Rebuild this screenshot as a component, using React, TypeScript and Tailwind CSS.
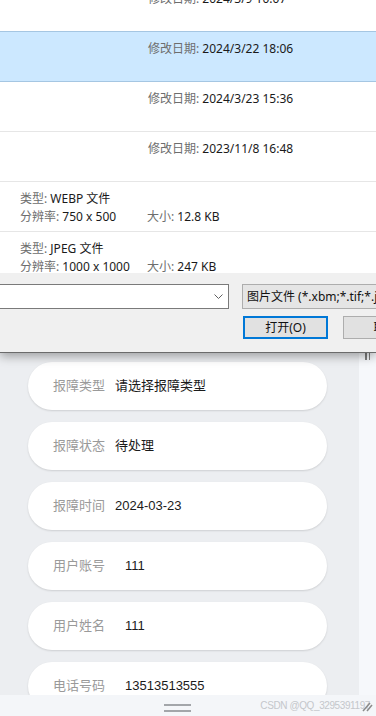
import React from "react";

const dlgFont = { fontFamily: '"Noto Sans", "Noto Sans CJK SC", sans-serif' };
const pageFont = { fontFamily: '"Liberation Sans", "Noto Sans CJK SC", sans-serif' };

function DateRow({ date, selected, borderBlue }: { date: string; selected?: boolean; borderBlue?: boolean }) {
  return (
    <div
      className={`h-[50px] pl-[148px] pt-[9px] text-[12px] leading-[16px] border-b ${
        borderBlue ? "border-[#a5c6e2]" : "border-[#e6e6e6]"
      } ${selected ? "bg-[#cce8ff]" : "bg-white"}`}
    >
      <span className="text-[#6d6d6d]">修改日期: </span>
      <span className="text-[#1a1a1a]">{date}</span>
    </div>
  );
}

function DetailRow({ type, res, size }: { type: string; res: string; size: string }) {
  return (
    <div className="h-[50px] pl-[20px] pt-[8px] text-[12px] leading-[18px] border-b border-[#e6e6e6] bg-white">
      <div>
        <span className="text-[#6d6d6d]">类型: </span>
        <span className="text-[#1a1a1a]">{type}</span>
      </div>
      <div className="flex">
        <div className="w-[127px] shrink-0">
          <span className="text-[#6d6d6d]">分辨率: </span>
          <span className="text-[#1a1a1a]">{res}</span>
        </div>
        <div>
          <span className="text-[#6d6d6d]">大小: </span>
          <span className="text-[#1a1a1a]">{size}</span>
        </div>
      </div>
    </div>
  );
}

function Dialog() {
  return (
    <div
      className="relative z-10 h-[353px] shrink-0 flex flex-col overflow-hidden bg-[#f0f0f0] border-b border-[#6b6b6b] shadow-[0_3px_10px_rgba(0,0,0,0.35)]"
      style={dlgFont}
    >
      <div className="h-[273px] shrink-0 overflow-hidden bg-white">
        <div className="mt-[-18px]">
          <DateRow date="2024/3/9 10:07" borderBlue />
          <DateRow date="2024/3/22 18:06" selected borderBlue />
          <DateRow date="2024/3/23 15:36" />
          <DateRow date="2023/11/8 16:48" />
          <DetailRow type="WEBP 文件" res="750 x 500" size="12.8 KB" />
          <DetailRow type="JPEG 文件" res="1000 x 1000" size="247 KB" />
        </div>
      </div>
      <div className="flex-1 flex flex-col pt-[11px] text-[12px]">
        <div className="flex gap-[13px] items-center">
          <div className="w-[229px] h-[25px] shrink-0 bg-white border border-l-0 border-[#7a7a7a] flex items-center justify-end pr-[5px]">
            <svg width="9" height="5" viewBox="0 0 9 5" fill="none">
              <path d="M0.5 0.5 L4.5 4.5 L8.5 0.5" stroke="#606060" strokeWidth="1" />
            </svg>
          </div>
          <div className="h-[25px] w-[170px] shrink-0 bg-[#e5e5e5] border border-[#adadad] flex items-center pl-[4px] text-[#111] whitespace-nowrap">
            图片文件 (*.xbm;*.tif;*.jfif;*.ico;*.tiff;*.gif)
          </div>
        </div>
        <div className="flex gap-[15px] mt-[7px] pl-[243px]">
          <div className="w-[85px] h-[23px] shrink-0 bg-[#e1e1e1] border-2 border-[#0078d7] flex items-center justify-center text-[#111]">
            打开(O)
          </div>
          <div className="w-[85px] h-[23px] shrink-0 bg-[#e1e1e1] border border-[#adadad] flex items-center justify-center text-[#111]">
            取消
          </div>
        </div>
      </div>
    </div>
  );
}

function Card({ label, value, wide }: { label: string; value: string; wide?: boolean }) {
  return (
    <div className="h-[48px] shrink-0 rounded-full bg-white shadow-[0_1px_2px_rgba(0,0,0,0.13)] flex items-center pl-[25px] text-[13px]">
      <span className="text-[#9a9a9a]">{label}</span>
      <span className={`${wide ? "ml-[20px]" : "ml-[10px]"} text-[#1b1b1b]`}>{value}</span>
    </div>
  );
}

export default function App() {
  return (
    <div className="w-[376px] h-[716px] overflow-hidden flex flex-col bg-[#eceef1]" style={pageFont}>
      <Dialog />
      <div className="flex flex-1 min-h-0">
        <div className="w-[359px] shrink-0 flex flex-col gap-[12px] pt-[9px] pl-[28px] pr-[32px] overflow-hidden">
          <Card label="报障类型" value="请选择报障类型" />
          <Card label="报障状态" value="待处理" />
          <Card label="报障时间" value="2024-03-23" />
          <Card label="用户账号" value="111" wide />
          <Card label="用户姓名" value="111" wide />
          <Card label="电话号码" value="13513513555" wide />
        </div>
        <div className="flex-1 bg-[#f6f8fb] flex justify-center pt-0">
          <div className="flex gap-[2px] h-[7px]">
            <div className="w-[1.5px] h-full bg-[#7d7d7d]" />
            <div className="w-[1.5px] h-full bg-[#7d7d7d]" />
          </div>
        </div>
      </div>
      <div className="h-[21px] shrink-0 bg-[#f4f6f9] flex items-center relative">
        <div className="absolute left-[164px] top-[9px] flex flex-col gap-[4px]">
          <div className="w-[27px] h-[2px] bg-[#a3a6aa]" />
          <div className="w-[27px] h-[2px] bg-[#a3a6aa]" />
        </div>
        <div className="ml-auto pr-[6px] text-[10px] text-[#c4c7cb] tracking-[-0.4px]" style={pageFont}>
          CSDN @QQ_3295391197
        </div>
        <svg className="absolute right-[3px] top-[5px]" width="12" height="12" viewBox="0 0 12 12" fill="none">
          <path d="M2 11 L9 3" stroke="#8a8a8a" strokeWidth="1.5" />
          <path d="M6 11 L11 5" stroke="#8a8a8a" strokeWidth="1.5" />
        </svg>
      </div>
    </div>
  );
}
